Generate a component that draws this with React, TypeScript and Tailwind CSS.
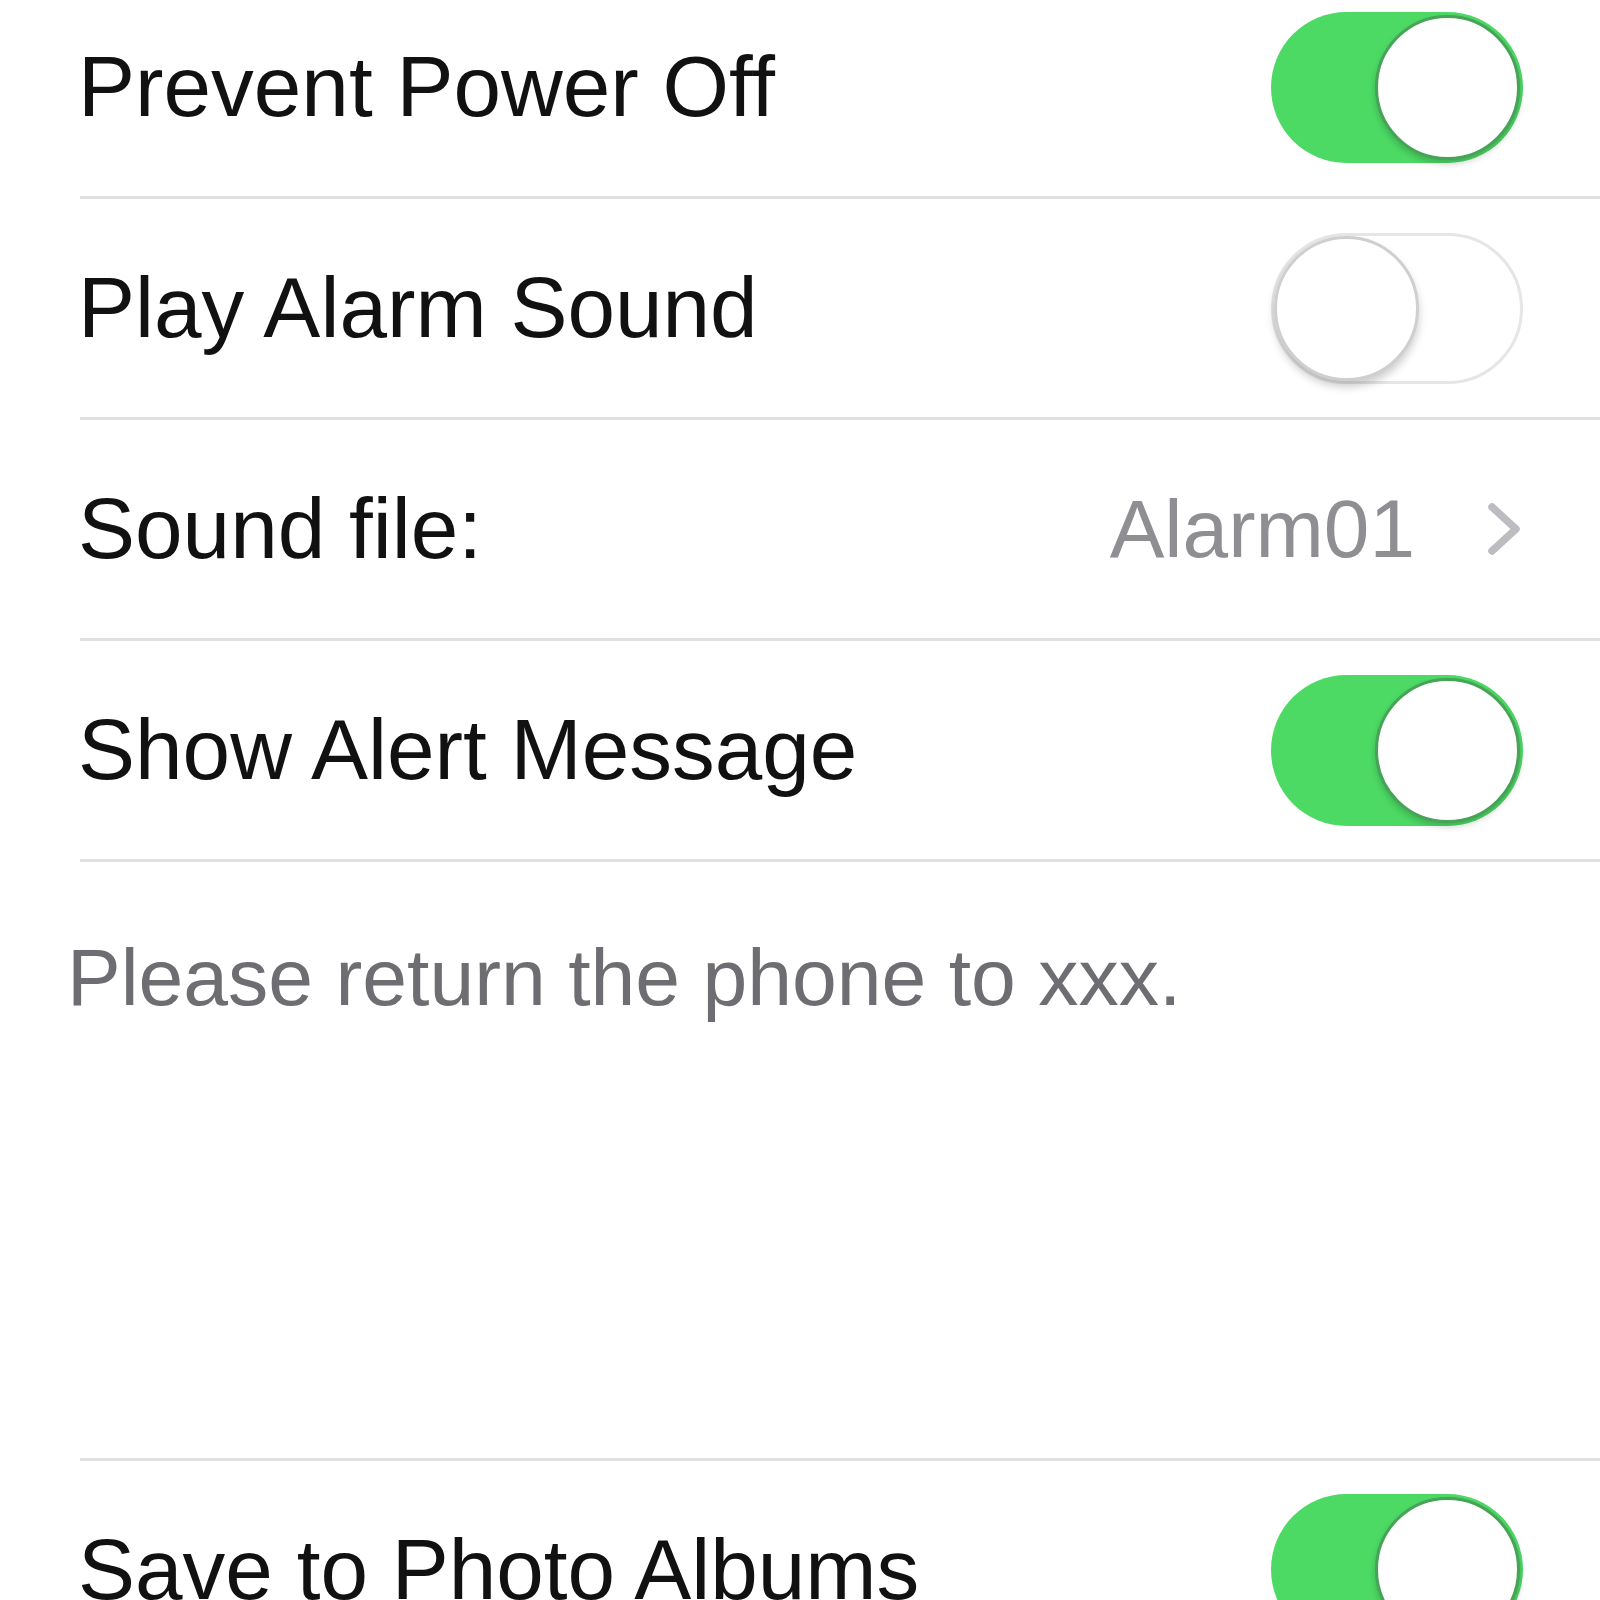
type Row =
  | { label: string; kind: "toggle"; on: boolean }
  | { label: string; kind: "link"; value: string };

const groupOne: Row[] = [
  { label: "Prevent Power Off", kind: "toggle", on: true },
  { label: "Play Alarm Sound", kind: "toggle", on: false },
  { label: "Sound file:", kind: "link", value: "Alarm01" },
  { label: "Show Alert Message", kind: "toggle", on: true },
];

const groupTwo: Row[] = [{ label: "Save to Photo Albums", kind: "toggle", on: true }];

function Toggle({ on }: { on: boolean }) {
  if (on) {
    return (
      <div className="flex h-[151px] w-[252px] items-center justify-end rounded-full bg-[#4cd964] p-[3px]">
        <div className="h-[145px] w-[145px] rounded-full border-[3px] border-[#46a357] bg-white shadow-[0_4px_6px_rgba(0,0,0,0.18)]" />
      </div>
    );
  }
  return (
    <div className="flex h-[151px] w-[252px] items-center justify-start rounded-full border-[3px] border-[#e6e6e6] bg-white">
      <div className="h-[145px] w-[145px] rounded-full border-[3px] border-[#cfcfcf] bg-white shadow-[0_6px_8px_rgba(0,0,0,0.2)]" />
    </div>
  );
}

function Chevron() {
  return (
    <svg width="40" height="62" viewBox="0 0 40 62" className="ml-[70px] -mr-[2px]">
      <polyline
        points="7,9 31,31 7,53"
        fill="none"
        stroke="#bcbcc1"
        strokeWidth="7.5"
        strokeLinecap="round"
        strokeLinejoin="round"
      />
    </svg>
  );
}

function SettingRow({ row, last }: { row: Row; last?: boolean }) {
  return (
    <div className="ml-[78px]">
      <div className="flex h-[218px] items-center justify-between pr-[77px]">
        <span className="text-[85.5px] leading-none text-[#111]">{row.label}</span>
        {row.kind === "toggle" ? (
          <Toggle on={row.on} />
        ) : (
          <div className="flex items-center">
            <span className="text-[82px] leading-none text-[#8e8e93]">{row.value}</span>
            <Chevron />
          </div>
        )}
      </div>
      {!last && <div className="ml-[2px] h-[3px] bg-[#e0e0e0]" />}
    </div>
  );
}

export default function App() {
  return (
    <div className="h-[1600px] overflow-hidden bg-white font-['Liberation_Sans',Arial,sans-serif]">
      <div className="-mt-[22px]">
        {groupOne.map((row) => (
          <SettingRow key={row.label} row={row} />
        ))}
      </div>
      <p className="mb-[440px] pl-[67px] pt-[75px] text-[80.5px] leading-none text-[#6d6d72]">
        Please return the phone to xxx.
      </p>
      <div className="ml-[80px] h-[3px] bg-[#e0e0e0]" />
      {groupTwo.map((row) => (
        <SettingRow key={row.label} row={row} last />
      ))}
    </div>
  );
}
